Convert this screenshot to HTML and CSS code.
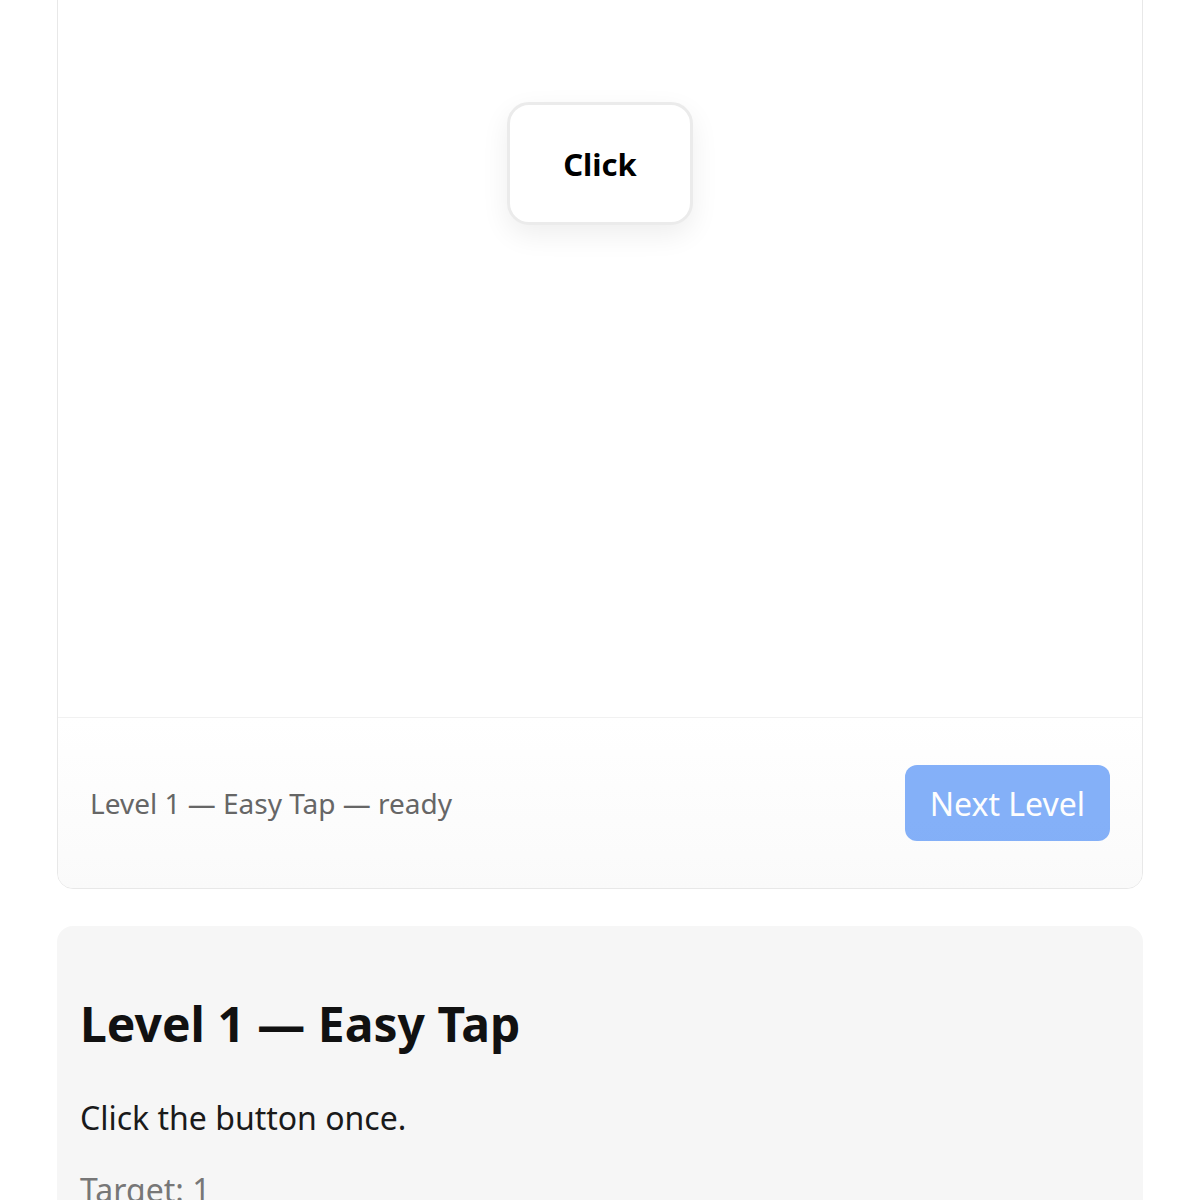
FILE: index.html
```html
<!DOCTYPE html>
<html>
<head>
  <meta charset="UTF-8">
  <title>Click Levels</title>
  <link rel="stylesheet" href="styles.css">
</head>
<body>
  <div class="page">
    <div class="game-card">
      <div class="arena">
        <button class="target-button">Click</button>
      </div>
      <div class="game-footer">
        <span class="status">Level 1 — Easy Tap — ready</span>
        <button class="next-button" disabled>Next Level</button>
      </div>
    </div>

    <div class="info-card">
      <h2>Level 1 — Easy Tap</h2>
      <p class="description">Click the button once.</p>
      <p class="target">Target: 1</p>
    </div>
  </div>
</body>
</html>
```

FILE: styles.css
```css
:root {
  --text-color: #111111;
  --muted-color: #666666;
  --border-color: #e8e8e8;
  --panel-bg: #f6f6f6;
  --primary-color: #3b82f6;
}

* {
  box-sizing: border-box;
  margin: 0;
  padding: 0;
}

body {
  font-family: 'Noto Sans', 'Open Sans', sans-serif;
  background-color: #ffffff;
  color: var(--text-color);
}

.page {
  width: 1086px;
  margin: -60px auto 0;
  display: flex;
  flex-direction: column;
  gap: 37px;
}

.game-card {
  border: 1px solid var(--border-color);
  border-radius: 16px;
  background-color: #ffffff;
  overflow: hidden;
}

.arena {
  position: relative;
  height: 776px;
}

.target-button {
  position: absolute;
  top: 161px;
  left: 50%;
  transform: translateX(-50%);
  width: 186px;
  height: 123px;
  border: 3px solid #ebebeb;
  border-radius: 22px;
  background-color: #ffffff;
  box-shadow: 0 10px 28px rgba(0, 0, 0, 0.07);
  font-family: 'Noto Sans', 'Open Sans', sans-serif;
  font-size: 31px;
  font-weight: 700;
  color: #000000;
  cursor: pointer;
}

.game-footer {
  display: flex;
  align-items: center;
  justify-content: space-between;
  height: 171px;
  padding: 0 32px;
  border-top: 1px solid #f1f1f1;
  background: linear-gradient(#ffffff, #fafafa);
}

.status {
  font-size: 28px;
  color: var(--muted-color);
}

.next-button {
  height: 76px;
  padding: 0 25px;
  border: none;
  border-radius: 12px;
  background-color: var(--primary-color);
  opacity: 0.62;
  color: #ffffff;
  font-family: 'Noto Sans', 'Open Sans', sans-serif;
  font-size: 32px;
}

.info-card {
  background-color: var(--panel-bg);
  border-radius: 16px;
  padding: 24px 23px 40px;
}

h2 {
  font-size: 48px;
  font-weight: 700;
  line-height: 1.2;
  margin: 45px 0 41px;
}

.description {
  font-size: 32px;
  line-height: 1.5;
  color: #1a1a1a;
  margin-bottom: 24px;
}

.target {
  font-size: 32px;
  line-height: 1.5;
  color: #777777;
}
```
